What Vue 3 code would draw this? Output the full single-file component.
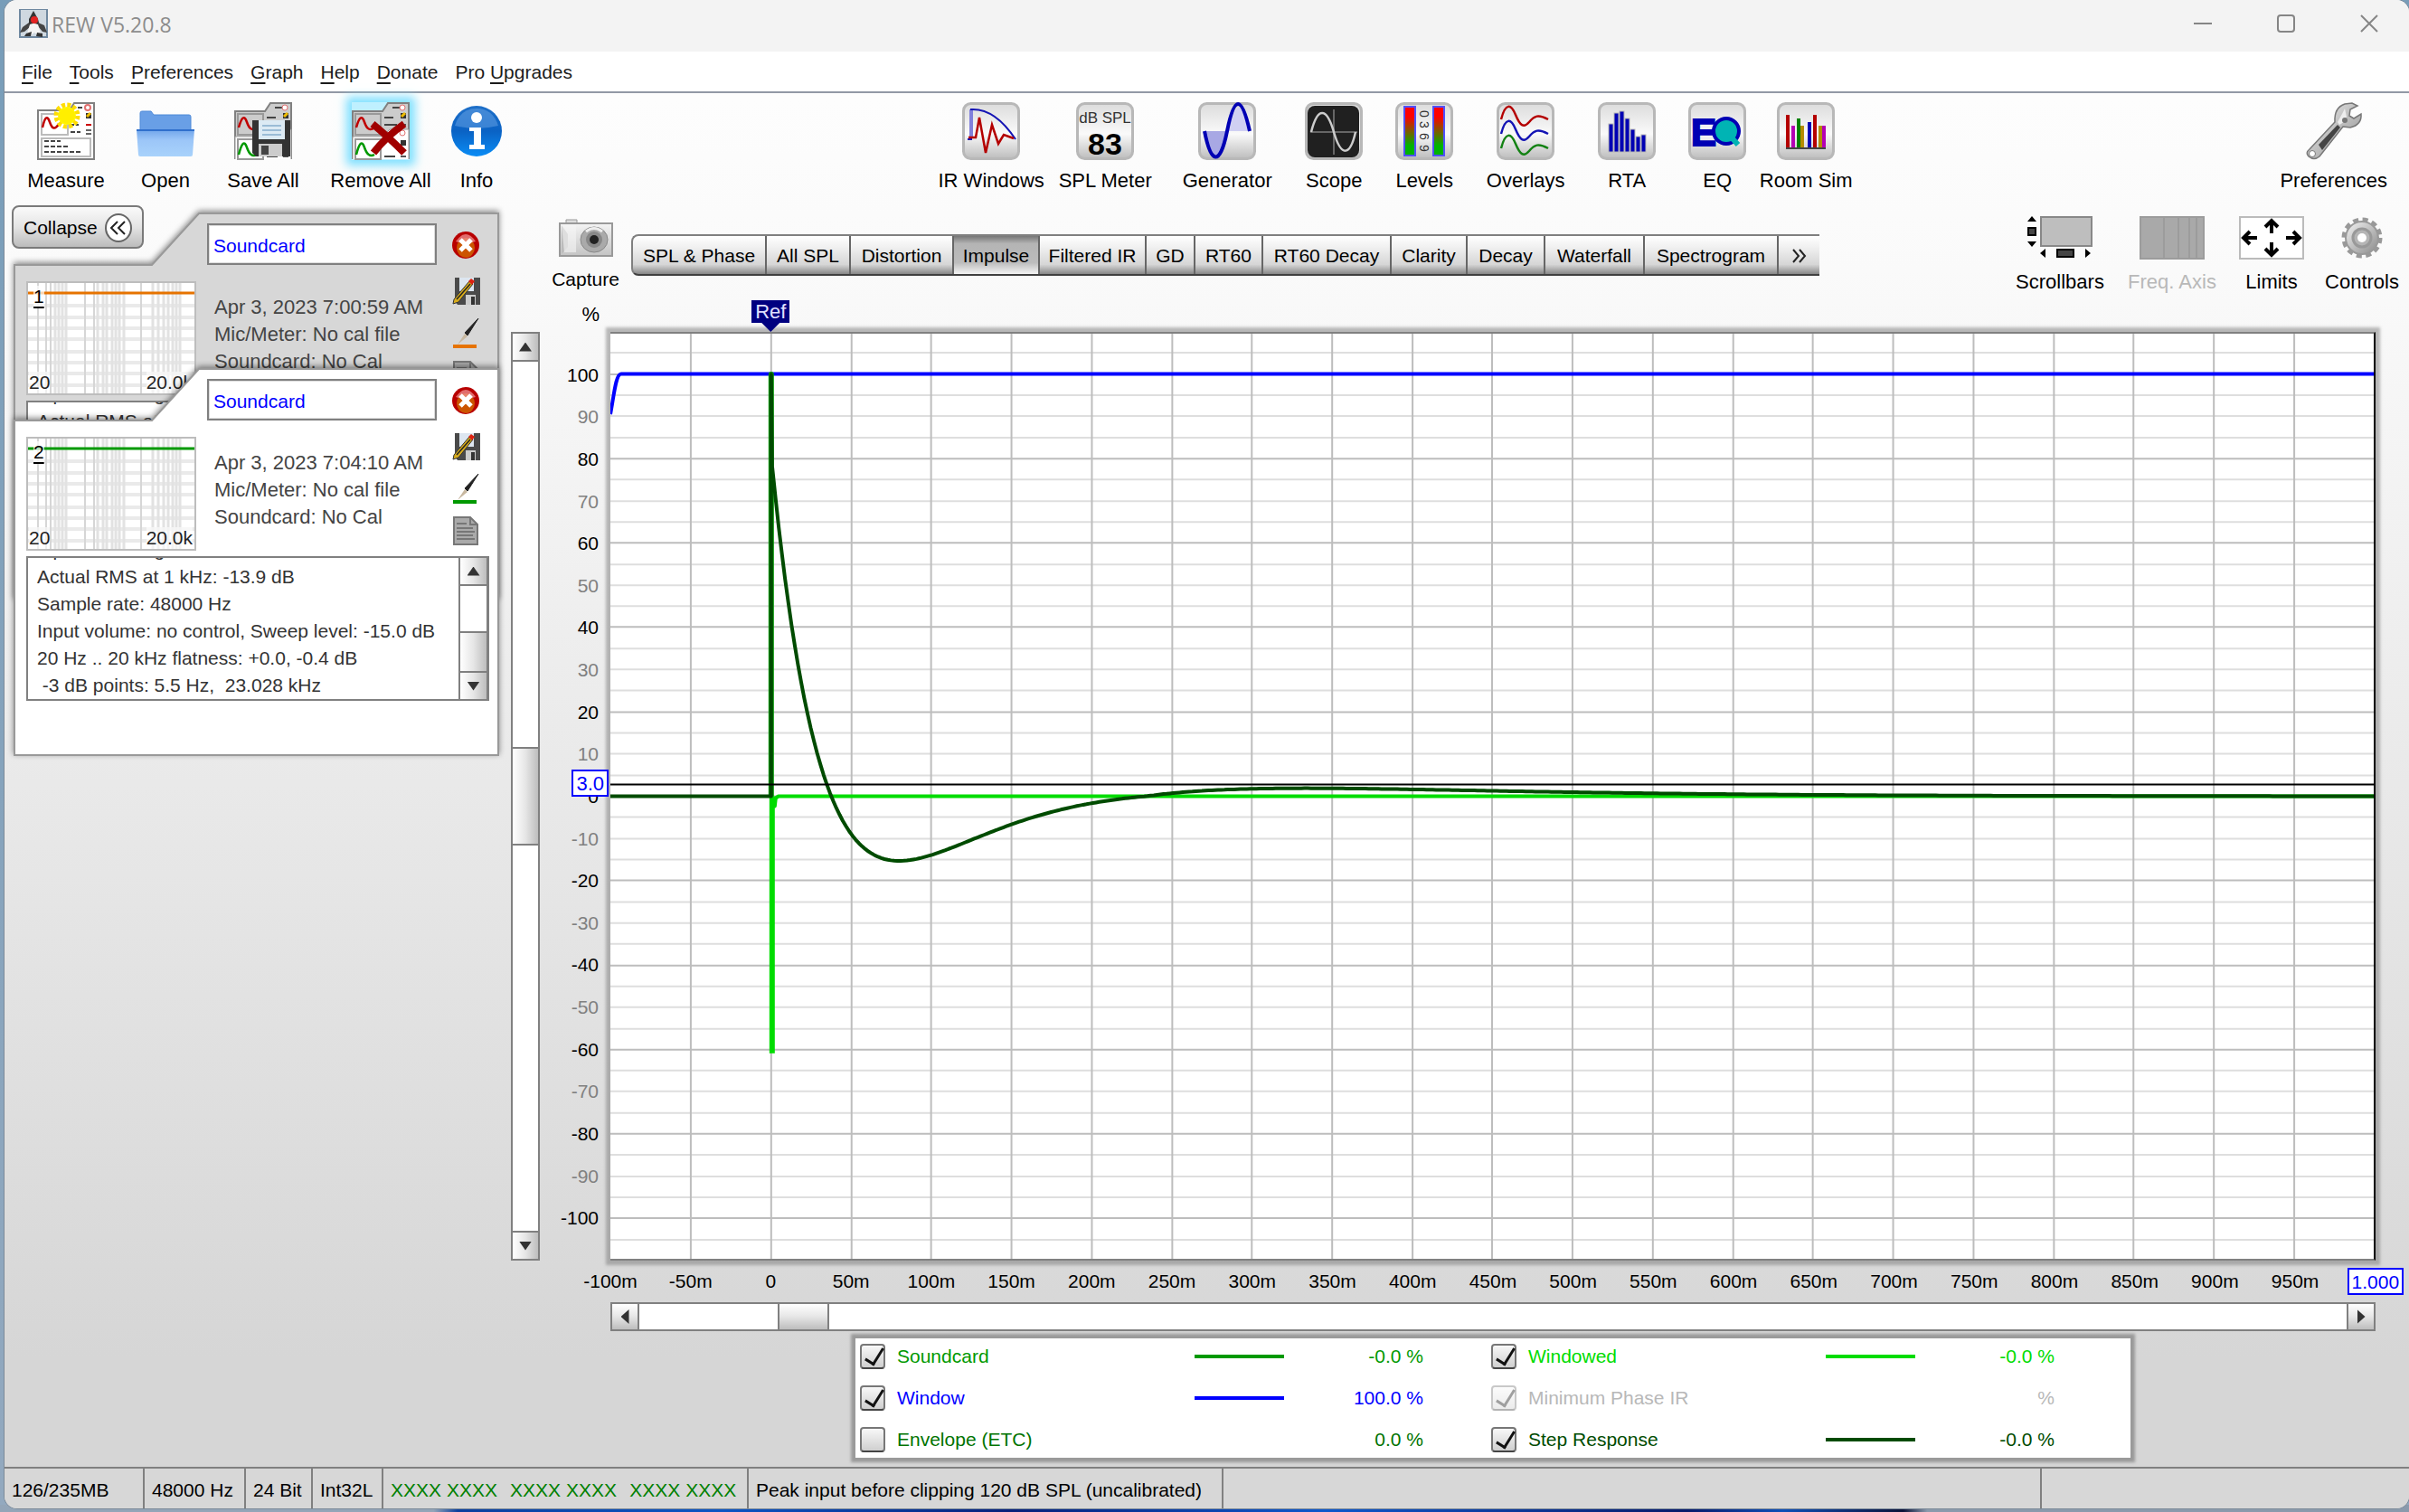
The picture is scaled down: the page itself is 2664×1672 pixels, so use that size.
<template>
  <div class="desktop">
    <div class="window">
      <header class="titlebar">
        <svg class="duke" width="32" height="32" viewBox="0 0 32 32">
          <rect width="32" height="32" fill="#6f88a0"/>
          <rect x="2" y="1" width="28" height="29" fill="#cfd8e0"/>
          <path d="M16 2l5 9 2 8H11l0-8z" fill="#333"/>
          <path d="M11 15l-7 5-3 6 5-1 6-5zM21 15l7 3 3 8-5-1-5-6z" fill="#444"/>
          <path d="M12 17q4-2 9 0l3 10-3 2-4-3-5 4-3-3z" fill="#f4f4f4"/>
          <path d="M8 27l6-2-1 5H6zM20 26l6 1 0 4-7-1z" fill="#333"/>
          <circle cx="17" cy="12" r="4" fill="#e32222"/>
        </svg>
        <span class="title">REW V5.20.8</span>
        <div class="win-controls">
          <button aria-label="Minimize"><svg width="20" height="20" viewBox="0 0 20 20"><path d="M0 10h20"/></svg></button>
          <button aria-label="Maximize"><svg width="20" height="20" viewBox="0 0 20 20"><rect x="1" y="1" width="18" height="18" rx="3"/></svg></button>
          <button aria-label="Close"><svg width="20" height="20" viewBox="0 0 20 20"><path d="M1 1l18 18M19 1L1 19"/></svg></button>
        </div>
      </header>

      <nav class="menubar">
        <button v-for="m in menus" :key="m.key + m.rest">{{ m.pre }}<u>{{ m.key }}</u>{{ m.rest }}</button>
      </nav>

      <div class="toolbar">
        <div class="tools tools-file">
          <button v-for="t in fileTools" :key="t.label" class="tool" :class="{ hot: t.hot }">
            <svg viewBox="0 0 64 64" v-html="t.icon"></svg>
            <span>{{ t.label }}</span>
          </button>
        </div>
        <div class="tools tools-main">
          <button v-for="t in mainTools" :key="t.label" class="tool">
            <svg viewBox="0 0 64 64" v-html="tile + t.icon"></svg>
            <span>{{ t.label }}</span>
          </button>
        </div>
        <div class="tools">
          <button class="tool">
            <svg viewBox="0 0 64 64">
              <path d="M5 52L33 22Q32 6 44 2L52 1 58 4 50 8 49 15 54 18 62 13Q63 25 50 28L42 27 16 60Q10 65 4 60 0 56 5 52z" fill="url(#steel)" stroke="#777" stroke-width="1.5"/>
              <path d="M15 47L36 25l3 3-20 25z" fill="#444"/>
              <circle cx="8" cy="57" r="3.5" fill="#fff" stroke="#777"/>
              <path d="M36 22l5-9 3-6 2 9-3 6-5 3z" fill="#eee"/>
              <circle cx="44" cy="20" r="3" fill="#777"/>
            </svg>
            <span>Preferences</span>
          </button>
        </div>
      </div>

      <main class="main">
        <aside class="sidebar">
          <button class="collapse">Collapse
            <svg width="30" height="32" viewBox="0 0 30 32"><ellipse cx="15" cy="16" rx="14" ry="15" fill="#fff" stroke="#666" stroke-width="2"/><path d="M14 9l-7 7 7 7M22 9l-7 7 7 7" fill="none" stroke="#222" stroke-width="2"/></svg>
          </button>
          <div class="deck">
            <section v-for="c in cards" :key="c.num" class="card">
              <svg class="card-shape" viewBox="0 0 540 430">
                <path d="M3 429V59H155L207 2H538V429z" :fill="c.fill" stroke="#999" stroke-width="2"/>
              </svg>
              <div class="card-body">
                <div class="thumb">
                  <svg viewBox="0 0 184 122" width="184" height="122">
                    <path d="M0 25h184M0 38h184M0 50h184M0 62h184M0 76h184M0 88h184M0 100h184M0 113h184" stroke="#eaeaea" stroke-width="4"/>
                    <path d="M11 0v122M20 0v122M25 0v122M63 0v122M73 0v122M125 0v122" stroke="#d6d6d6" stroke-width="2"/>
                    <path d="M30 0v122M34 0v122M38 0v122M42 0v122M77 0v122M83 0v122M87 0v122M93 0v122M97 0v122M101 0v122M106 0v122M138 0v122M144 0v122M150 0v122M155 0v122M160 0v122M164 0v122M168 0v122" stroke="#e2e2e2" stroke-width="3"/>
                    <path d="M0 11h184" :stroke="c.color" stroke-width="3"/>
                  </svg>
                  <u class="thumb-num">{{ c.num }}</u>
                  <span class="thumb-lo">20</span>
                  <span class="thumb-hi">20.0k</span>
                </div>
                <div class="card-mid">
                  <input type="text" v-model="c.name" :aria-label="'Measurement ' + c.num + ' name'">
                  <p class="meta">{{ c.date }}<br>Mic/Meter: No cal file<br>Soundcard: No Cal</p>
                </div>
                <div class="card-icons">
                  <button aria-label="Delete"><svg width="32" height="32" viewBox="0 0 32 32"><circle cx="16" cy="16" r="15" fill="#b80000"/><ellipse cx="16" cy="19" rx="10" ry="11" fill="#cc5500"/><path d="M5 12q11-16 22 0-11 4-22 0z" fill="#f29a9a" opacity=".7"/><path d="M10 10l12 12M22 10L10 22" stroke="#fff" stroke-width="5"/></svg></button>
                  <button aria-label="Save"><svg width="32" height="30" viewBox="0 0 32 30"><path d="M4 0h28v30H7l-3-4z" fill="#4a4a4a"/><path d="M9 0h16v15H9z" fill="#dde6f0"/><path d="M16 19h11v11H16z" fill="#ccc"/><path d="M22 21h4v9h-4z" fill="#333"/><path d="M3 24L20 4l4 3L8 27l-6 2z" fill="#d8ac1c" stroke="#333" stroke-width="1"/><path d="M6 24L21 7" stroke="#222" stroke-width="1.5"/><path d="M19 4l3-3 4 3-3 4z" fill="#d21"/></svg></button>
                  <button aria-label="Trace colour"><svg width="32" height="34" viewBox="0 0 32 34"><path d="M30 1L15 17l3 3z" fill="#222" stroke="#222"/><path d="M15 18l-8 12 11-9z" fill="#c8b8a0"/><path d="M2 32h26" :stroke="c.color" stroke-width="4"/></svg></button>
                  <button aria-label="Notes"><svg width="32" height="32" viewBox="0 0 32 32"><path d="M3 1h18l8 8v22H3z" fill="#aaa" stroke="#777" stroke-width="2"/><path d="M21 1v8h8M6 8h11M6 13h18M6 17h20M6 21h18M6 25h20" fill="none" stroke="#777" stroke-width="2"/></svg></button>
                </div>
              </div>
              <div class="notes">
                <div class="notes-text">
                  <div v-for="line in noteLines" :key="line">{{ line }}</div>
                </div>
                <div class="scroll scroll-y">
                  <button aria-label="Scroll up"><i class="up"></i></button>
                  <div class="track"></div>
                  <div class="handle"></div>
                  <button aria-label="Scroll down"><i class="down"></i></button>
                </div>
              </div>
            </section>
          </div>
        </aside>

        <div class="scroll scroll-y side-scroll">
          <button aria-label="Scroll up"><i class="up"></i></button>
          <div class="track"></div>
          <div class="handle"></div>
          <div class="track"></div>
          <button aria-label="Scroll down"><i class="down"></i></button>
        </div>

        <div class="graph-bar">
          <button class="tool capture">
            <svg viewBox="0 0 60 42">
              <path d="M8 1h12v6H8z" fill="#ddd" stroke="#999"/>
              <rect x="1" y="5" width="58" height="36" fill="url(#camera)" stroke="#999" stroke-width="2"/>
              <path d="M3 7l7 10v14l-7 8z" fill="#bbb"/>
              <path d="M3 7h16v30H6" fill="#f5f5f5" opacity=".6"/>
              <ellipse cx="39" cy="23" rx="15" ry="14" fill="#aaa" stroke="#888"/>
              <circle cx="39" cy="23" r="9" fill="#888"/>
              <circle cx="39" cy="23" r="5" fill="#222"/>
              <path d="M30 14q9-7 18 0" stroke="#eee" stroke-width="3" fill="none"/>
            </svg>
            <span>Capture</span>
          </button>
          <div class="tabs" role="tablist">
            <button v-for="t in tabs" :key="t" role="tab" :aria-selected="t === activeTab" :class="{ active: t === activeTab }" @click="activeTab = t">{{ t }}</button>
            <button class="more" aria-label="More graphs"><svg width="18" height="16" viewBox="0 0 18 16"><path d="M2 1l6 7-6 7M9 1l6 7-6 7" fill="none" stroke="#222" stroke-width="2"/></svg></button>
          </div>
          <div class="tools tools-graph">
            <button class="tool">
              <svg viewBox="0 0 72 48"><rect x="15" y="1" width="56" height="32" fill="#bebebe" stroke="#888" stroke-width="2"/><path d="M5 0l5 6H0zM5 34l5-6H0zM14 41l6-5v10zM70 41l-6-5v10z"/><path d="M1 13h8v8H1zM33 37h18v8H33z" fill="#444" stroke="#000" stroke-width="2"/></svg>
              <span>Scrollbars</span>
            </button>
            <button class="tool" disabled>
              <svg viewBox="0 0 72 48"><rect x="1" y="1" width="70" height="46" fill="#a9a9a9" stroke="#9c9c9c" stroke-width="2"/><path d="M27 0v48M43 0v48M55 0v48M63 0v48" stroke="#9c9c9c" stroke-width="2"/></svg>
              <span>Freq. Axis</span>
            </button>
            <button class="tool">
              <svg viewBox="0 0 72 48"><rect x="1" y="1" width="70" height="46" fill="#fff" stroke="#bbb" stroke-width="2"/><path d="M20 24H6m6-7l-7 7 7 7M52 24h14m-6-7l7 7-7 7M36 19V6m-7 6l7-7 7 7M36 29v13m-7-6l7 7 7-7" fill="none" stroke="#000" stroke-width="4"/></svg>
              <span>Limits</span>
            </button>
            <button class="tool">
              <svg viewBox="0 0 72 48"><circle cx="36" cy="24" r="20" fill="none" stroke="#999" stroke-width="5" stroke-dasharray="6 4.47"/><circle cx="36" cy="24" r="18" fill="url(#steel)" stroke="#999" stroke-width="2"/><circle cx="36" cy="24" r="10" fill="#b5b5b5" stroke="#999" stroke-width="3"/><circle cx="36" cy="24" r="5" fill="#fff"/></svg>
              <span>Controls</span>
            </button>
          </div>
        </div>

        <div class="y-axis">
          <span class="unit">%</span>
          <div v-for="v in yTicks" :key="v" class="y-tick" :class="{ minor: v % 20 }"><span v-if="Math.abs(v) < 110">{{ v }}</span></div>
        </div>

        <div class="plot">
          <svg viewBox="0 0 1952 1026" preserveAspectRatio="none">
            <path :d="minorGrid" class="grid minor"/>
            <path :d="majorGrid" class="grid"/>
            <path d="M0 91C4 70 6 46 12 46.500H1952" stroke="#0000ff" class="curve"/>
            <path d="M178 513V47V513" stroke="#009900" class="spike"/>
            <path d="M179 513L182 524 183 515 186 513H1952" stroke="#00dc00" class="curve"/>
            <path d="M179 513V797" stroke="#00dc00" class="spike"/>
            <path :d="stepCurve" stroke="#004b00" class="curve step"/>
            <path d="M0 500H1952" stroke="#000" stroke-width="2"/>
          </svg>
          <span class="ref-flag">Ref</span>
          <span class="y-cursor">3.0</span>
        </div>

        <div class="below">
          <div class="x-axis">
            <div v-for="x in xTicks" :key="x" :class="{ end: x === '1.000' }"><span>{{ x }}</span></div>
          </div>
          <div class="scroll scroll-x">
            <button aria-label="Scroll left"><i class="left"></i></button>
            <div class="track"></div>
            <div class="handle"></div>
            <div class="track track-rest"></div>
            <button aria-label="Scroll right"><i class="right"></i></button>
          </div>
          <div class="legend">
            <label v-for="s in series" :key="s.name" class="legend-row" :style="{ color: s.text }">
              <input type="checkbox" v-model="s.on" :disabled="s.off">
              <span class="name">{{ s.name }}</span>
              <i class="swatch" :style="{ background: s.line }"></i>
              <span class="value">{{ s.value }}</span>
            </label>
          </div>
        </div>
      </main>

      <footer class="statusbar">
        <span>126/235MB</span>
        <span>48000 Hz</span>
        <span>24 Bit</span>
        <span>Int32L</span>
        <span class="channels"><b v-for="n in 3" :key="n"><i>XXXX</i><i>XXXX</i></b></span>
        <span>Peak input before clipping 120 dB SPL (uncalibrated)</span>
        <span></span>
        <span></span>
      </footer>
    </div>

    <svg class="defs" width="0" height="0">
      <defs>
        <linearGradient id="tile" x2="0" y2="1"><stop offset="0" stop-color="#dcdcdc"/><stop offset=".55" stop-color="#fafafa"/><stop offset="1" stop-color="#bdbdbd"/></linearGradient>
        <linearGradient id="steel" x2="1" y2="1"><stop offset="0" stop-color="#f4f4f4"/><stop offset="1" stop-color="#8a8a8a"/></linearGradient>
        <linearGradient id="camera" x2="0" y2="1"><stop offset="0" stop-color="#f4f4f4"/><stop offset="1" stop-color="#c4c4c4"/></linearGradient>
        <linearGradient id="level" x2="0" y2="1"><stop offset=".2" stop-color="#f00"/><stop offset=".8" stop-color="#00b400"/></linearGradient>
        <linearGradient id="info" x2="0" y2="1"><stop offset="0" stop-color="#1e6fc8"/><stop offset=".5" stop-color="#0a62c4"/><stop offset="1" stop-color="#0a8cf5"/></linearGradient>
        <linearGradient id="folder" x2="0" y2="1"><stop offset="0" stop-color="#6fa4ea"/><stop offset=".4" stop-color="#9cc6f8"/><stop offset="1" stop-color="#a8d2fb"/></linearGradient>
      </defs>
    </svg>
  </div>
</template>

<script setup>
import { ref, reactive } from 'vue'

const menus = [
  { key: 'F', rest: 'ile' },
  { key: 'T', rest: 'ools' },
  { key: 'P', rest: 'references' },
  { key: 'G', rest: 'raph' },
  { key: 'H', rest: 'elp' },
  { key: 'D', rest: 'onate' },
  { pre: 'Pro ', key: 'U', rest: 'pgrades' }
]

// stacked measurement panels, shared by Save All and Remove All
const panels = `
  <path d="M1 63V10H34L40 1H63V63" fill="#ccc" stroke="#808080" stroke-width="2"/>
  <path d="M1 63V38H34L42 30H63V63" fill="#fff" stroke="#999"/>
  <path d="M4 13h28v23H4zM4 41h28v22H4z" fill="none" stroke="#999" stroke-width="2"/>
  <path d="M5 28Q10 10 14 22T25 28" fill="none" stroke="#c00000" stroke-width="2.5"/>
  <path d="M5 58Q10 38 14 50T25 58" fill="none" stroke="#009900" stroke-width="2.5"/>
  <path d="M45 6h8M36 17h10M36 25h14M36 60h12" stroke="#444" stroke-width="2"/>
  <circle cx="56" cy="6" r="3" fill="#fff" stroke="#e07070"/><circle cx="56" cy="34" r="3" fill="#fff" stroke="#e07070"/>
  <path d="M54 12h6v6h-6z" fill="#333"/><path d="M55 16l4-4" stroke="#eb0" stroke-width="3"/>
  <path d="M54 42h6v6h-6z" fill="#333"/><path d="M54 25h6M54 60h6" stroke="#555" stroke-width="2"/>`

const fileTools = [
  {
    label: 'Measure',
    icon: `<path d="M1 63V9H36L41 1H63V63z" fill="#fff" stroke="#808080" stroke-width="2"/>
      <path d="M5 13h29v23H5zM5 40h54v20H5z" fill="none" stroke="#bbb" stroke-width="2"/>
      <path d="M6 28Q10 10 14 22T24 24" fill="none" stroke="#c00000" stroke-width="2.5"/>
      <path d="M45 6h7M36 25h10M37 33h11M8 43h18M8 49h28M8 55h40" stroke="#444" stroke-width="2" stroke-dasharray="5 2"/>
      <circle cx="56" cy="6" r="3" fill="#fff" stroke="#e07070" stroke-width="2"/>
      <path d="M54 12h6v6h-6z" fill="#333"/><path d="M55 16l4-4" stroke="#eb0" stroke-width="3"/>
      <path d="M54 25h6" stroke="#c00" stroke-width="2"/><path d="M54 31h6M54 35h6" stroke="#666" stroke-width="2"/>
      <circle cx="33" cy="15" r="10" fill="#ff0"/><circle cx="33" cy="15" r="12" fill="none" stroke="#fd0" stroke-width="5" stroke-dasharray="4 2.28"/>
      <circle cx="33" cy="15" r="9" fill="#ffef00"/>`
  },
  {
    label: 'Open',
    icon: `<path d="M4 38V12Q4 10 6 10H16L19 14H58Q60 14 60 16V38z" fill="#699fe6" stroke="#4f8ad8"/>
      <path d="M0 30H64L62 58Q62 60 60 60H4Q2 60 2 58z" fill="url(#folder)"/><path d="M0 31h64" stroke="#2f6fcc" stroke-width="2"/>`
  },
  {
    label: 'Save All',
    icon: panels + `<path d="M20 20H62V60H24L20 56z" fill="#333"/><path d="M27 20h29v21H27z" fill="#dceaf4"/>
      <path d="M31 26h21M31 31h21M31 36h21" stroke="#9bbcd6" stroke-width="2"/><path d="M27 46h26v14H27z" fill="#ccc"/><path d="M30 48h8v10h-8z" fill="#444"/>`
  },
  {
    label: 'Remove All',
    hot: true,
    icon: panels + '<path d="M23 24Q40 38 58 56M58 24Q38 38 24 56" fill="none" stroke="#a00000" stroke-width="8"/>'
  },
  {
    label: 'Info',
    icon: `<circle cx="32" cy="32" r="28" fill="url(#info)"/><path d="M8 26Q14 7 32 7T56 26Q32 32 8 26z" fill="#7fb4ee" opacity=".4"/>
      <circle cx="32" cy="17" r="6" fill="#fff"/><path d="M24 28H37V47H41V52H24V47H29V32H24z" fill="#fff"/>`
  }
]

const tile = '<rect x="1.5" y="1.5" width="61" height="61" rx="8" fill="url(#tile)" stroke="#b8b8b8" stroke-width="3"/>'

const mainTools = [
  {
    label: 'IR Windows',
    icon: `<path d="M10 8v31" stroke="#8080dc" stroke-width="4"/><path d="M6 41H11M9 8Q36 6 59 41" fill="none" stroke="#1414b4" stroke-width="2"/>
      <path d="M7 39H15L19 17 26 56 33 25 40 46 46 36 57 40" fill="none" stroke="#b40000" stroke-width="2.5"/>`
  },
  {
    label: 'SPL Meter',
    icon: `<text x="32" y="23" text-anchor="middle" font-size="17" fill="#333">dB SPL</text>
      <text x="32" y="58" text-anchor="middle" font-size="34" font-weight="bold">83</text>`
  },
  {
    label: 'Generator',
    icon: `<path d="M7 32Q19 86 32 32z" fill="#a8a8e4"/><path d="M32 32Q46-20 57 32z" fill="#d0d0f2"/>
      <path d="M7 32C14 68 24 72 32 32S48-8 57 32" fill="none" stroke="#0000b4" stroke-width="4"/>`
  },
  {
    label: 'Scope',
    icon: `<rect x="3" y="4" width="57" height="57" rx="8" fill="#202020"/><path d="M6 33H58M32 8V58" stroke="#666" stroke-width="2"/>
      <path d="M7 33C14 5 24 5 32 33S50 60 56 33" fill="none" stroke="#ccc" stroke-width="2.5"/>`
  },
  {
    label: 'Levels',
    icon: `<rect x="10" y="5" width="12" height="54" fill="url(#level)" stroke="#5050ff" stroke-width="2"/><rect x="42" y="5" width="12" height="54" fill="url(#level)" stroke="#5050ff" stroke-width="2"/>
      <g font-size="14" fill="#333"><text transform="translate(27 9) rotate(90)">0</text><text transform="translate(27 21) rotate(90)">3</text><text transform="translate(27 34) rotate(90)">6</text><text transform="translate(27 47) rotate(90)">9</text></g>`
  },
  {
    label: 'Overlays',
    icon: ['#b40000', '#1414b4', '#148214'].map((c, i) =>
      `<path transform="translate(0 ${i * 16})" d="M5 19C10 0 16 2 21 14S30 29 36 22 46 13 57 19" fill="none" stroke="${c}" stroke-width="2.5"/>`).join('')
  },
  {
    label: 'RTA',
    icon: '<g fill="#0000b4" stroke="#b8b8b8" stroke-width="1">' + [24, 12, 10, 18, 30, 38, 36].map((y, i) =>
      `<rect x="${12 + i * 6}" y="${y}" width="5" height="${55 - y}"/>`).join('') + '</g>'
  },
  {
    label: 'EQ',
    icon: `<text x="3" y="48" font-size="42" font-weight="bold" fill="#0000b4" stroke="#0000b4" stroke-width="2">E</text>
      <circle cx="42" cy="32" r="14" fill="#00b4b4" stroke="#0000b4" stroke-width="4"/><path d="M45 36L55 47" stroke="#00b4b4" stroke-width="6"/>`
  },
  {
    label: 'Room Sim',
    icon: [[10, 14, '#b40000'], [16, 26, '#b400b4'], [22, 18, '#008000'], [26, 26, '#b48c00'], [34, 22, '#0000b4'], [40, 14, '#b40000'], [46, 26, '#b48c00'], [50, 26, '#b400b4']].map(b =>
      `<rect x="${b[0]}" y="${b[1]}" width="4" height="${51 - b[1]}" fill="${b[2]}"/>`).join('') + '<path d="M10 51h44" stroke="#444" stroke-width="2"/>'
  }
]

const cards = reactive([
  { num: 1, name: 'Soundcard', date: 'Apr 3, 2023 7:00:59 AM', color: '#e67300', fill: '#d7d7d7' },
  { num: 2, name: 'Soundcard', date: 'Apr 3, 2023 7:04:10 AM', color: '#009900', fill: '#ffffff' }
])

const noteLines = [
  'Input RMS target',
  'Actual RMS at 1 kHz: -13.9 dB',
  'Sample rate: 48000 Hz',
  'Input volume: no control, Sweep level: -15.0 dB',
  '20 Hz .. 20 kHz flatness: +0.0, -0.4 dB',
  ' -3 dB points: 5.5 Hz,  23.028 kHz'
]

const tabs = ['SPL & Phase', 'All SPL', 'Distortion', 'Impulse', 'Filtered IR', 'GD', 'RT60', 'RT60 Decay', 'Clarity', 'Decay', 'Waterfall', 'Spectrogram']
const activeTab = ref('Impulse')

const yTicks = Array.from({ length: 23 }, (_, i) => 110 - i * 10)
const xTicks = Array.from({ length: 23 }, (_, i) => {
  const ms = -100 + i * 50
  if (ms === 1000) return '1.000'
  return ms ? ms + 'm' : '0'
})

const px = ms => (ms + 100) * 1952 / 1100
const py = pct => (110 - pct) * 1026 / 220

let minorGrid = ''
let majorGrid = ''
for (let v = -105; v < 110; v += 5) {
  const line = `M0 ${Math.round(py(v))}H1952`
  if (v % 20) minorGrid += line
  else majorGrid += line
}
for (let ms = -50; ms < 1000; ms += 50) {
  majorGrid += `M${Math.ceil(px(ms))} 0V1026`
}

// second-order high-pass response with a slow tail
function step(t) {
  if (t <= 233) return 78 * (1 - t / 36.8) * (1 - t / 233) * Math.exp(-0.0171 * t)
  const u = t - 233
  return 0.0516 * u * Math.exp(-u / 100)
}

let stepCurve = `M0 513H178V47L179 ${py(78)}`
for (let t = 0; t <= 1000; t += 2) {
  stepCurve += `L${px(t + 1).toFixed(1)} ${py(step(t)).toFixed(1)}`
}

const series = reactive([
  { name: 'Soundcard', on: true, text: '#009900', line: '#009900', value: '-0.0 %' },
  { name: 'Windowed', on: true, text: '#00dc00', line: '#00dc00', value: '-0.0 %' },
  { name: 'Window', on: true, text: '#0000ff', line: '#0000ff', value: '100.0 %' },
  { name: 'Minimum Phase IR', on: true, off: true, text: '#b8b8b8', line: 'none', value: '%' },
  { name: 'Envelope (ETC)', on: false, text: '#007300', line: 'none', value: '0.0 %' },
  { name: 'Step Response', on: true, text: '#004b00', line: '#004b00', value: '-0.0 %' }
])
</script>

<style>
body {
  margin: 0;
}
</style>

<style scoped>
.desktop {
  box-sizing: border-box;
  min-height: 100vh;
  display: flex;
  padding: 0 0 4px 5px;
  background:
    linear-gradient(90deg, #93a5b8 18%, #0a3f9e 19%, #0b55c4 30%, #06207a 42%, #0d58cc 55%, #081a6a 70%, #0d4fb8 74%, #0a1238 79%, #8a9aac 80%) bottom / 100% 8px no-repeat,
    linear-gradient(#789db9, #93a9bf);
  font-family: "Liberation Sans", Arial, sans-serif;
  font-size: 22px;
  line-height: 30px;
  color: #000;
}

.desktop * {
  box-sizing: border-box;
}

button {
  font: inherit;
  color: inherit;
  background: none;
  border: none;
  padding: 0;
  white-space: nowrap;
}

svg {
  display: block;
}

.defs {
  position: absolute;
}

.window {
  flex: 1;
  min-width: 0;
  display: flex;
  flex-direction: column;
  border-radius: 14px;
  overflow: hidden;
  background: linear-gradient(#fdfdfd 110px, #fafafa 300px, #d6d6d6 1500px);
  box-shadow: 0 0 0 1px #7d8b99;
}

.titlebar {
  height: 57px;
  padding: 0 34px 6px 16px;
  display: flex;
  align-items: center;
  gap: 4px;
  background: #f3f3f3;
}

.title {
  padding-top: 2px;
  font-family: "Open Sans", "Noto Sans", sans-serif;
  font-size: 23px;
  color: #8c8c8c;
}

.win-controls {
  margin-left: auto;
  display: flex;
  gap: 72px;
}

.win-controls svg {
  fill: none;
  stroke: #858585;
  stroke-width: 2;
}

.menubar {
  height: 46px;
  padding: 2px 0 0 19px;
  display: flex;
  align-items: center;
  gap: 19px;
  background: #fff;
  border-bottom: 2px solid #9298a5;
  font-size: 21px;
}

.menubar u,
.thumb-num {
  text-underline-offset: 4px;
  text-decoration-thickness: 2px;
}

.menubar button {
  color: #1c1c1c;
}

.toolbar {
  height: 119px;
  padding-top: 10px;
  display: flex;
  justify-content: space-between;
}

.tools {
  display: grid;
  grid-auto-flow: column;
  align-items: start;
}

.tools-file {
  padding-left: 8px;
  grid-template-columns: 120px 100px 116px 144px 68px;
}

.tools-main {
  grid-template-columns: 120px 132px 138px 98px 102px 122px 102px 98px 98px;
}

.toolbar > .tools:last-child {
  padding-right: 24px;
}

.tool {
  display: flex;
  flex-direction: column;
  align-items: center;
  gap: 8px;
}

.tool svg {
  width: 64px;
  height: 64px;
  overflow: visible;
}

.tool.hot svg {
  background: #bff0ff;
  box-shadow: 0 0 10px 6px #7fe0ff;
}

.tool:disabled {
  color: #b8b8b8;
}

.main {
  flex: 1;
  display: grid;
  grid-template-columns: 560px 32px 78px 1fr 37px;
  grid-template-rows: 145px 1fr auto;
}

.sidebar {
  grid-area: 1 / 1 / 4 / 2;
  padding: 5px 0 0 8px;
  display: grid;
  align-content: start;
  justify-content: start;
}

.collapse {
  grid-area: 1 / 1;
  justify-self: start;
  z-index: 1;
  width: 146px;
  height: 48px;
  padding: 2px 11px 0;
  display: flex;
  align-items: center;
  justify-content: space-between;
  border: 2px solid #7a7a7a;
  border-radius: 8px;
  background: linear-gradient(#fafafa, #e4e4e4 50%, #bcbcbc);
  font-size: 21px;
}

.deck {
  grid-area: 1 / 1;
  padding-top: 7px;
}

.card {
  position: relative;
  width: 540px;
  height: 430px;
  padding: 13px 12px 0 16px;
}

.card + .card {
  margin-top: -258px;
}

.card-shape {
  position: absolute;
  inset: 0;
  width: 540px;
  height: 430px;
  overflow: visible;
  filter: drop-shadow(0 -2px 3px rgba(0, 0, 0, 0.45));
}

.card-body {
  position: relative;
  display: flex;
  gap: 12px;
}

.thumb {
  position: relative;
  width: 188px;
  height: 126px;
  margin-top: 64px;
  border: 2px solid #bdbdbd;
  background: #fff;
  color: #222;
  font-size: 21px;
  line-height: 24px;
}

.thumb-num,
.thumb-lo,
.thumb-hi {
  position: absolute;
}

.thumb-num {
  top: 3px;
  left: 6px;
  background: rgba(255, 255, 255, 0.7);
  color: #000;
}

.thumb-lo,
.thumb-hi {
  bottom: 0;
  background: rgba(255, 255, 255, 0.6);
}

.thumb-lo {
  left: 1px;
}

.thumb-hi {
  right: 2px;
}

.card-mid {
  width: 254px;
}

.card-mid input {
  display: block;
  width: 100%;
  height: 46px;
  padding: 4px 5px 0;
  border: 2px solid #808080;
  border-radius: 0;
  background: #fff;
  box-shadow: inset 0 0 0 1px #ddd;
  font: inherit;
  font-size: 21px;
  color: #0000ff;
}

.meta {
  margin: 32px 0 0;
  padding-left: 8px;
  color: #444;
  white-space: nowrap;
}

.card-icons {
  padding: 8px 0 0 4px;
  display: flex;
  flex-direction: column;
  gap: 14px;
}

.card-icons button:first-child {
  margin-bottom: 6px;
}

.notes {
  position: relative;
  height: 160px;
  margin-top: 6px;
  display: flex;
  border: 2px solid #808080;
  background: #fff;
  color: #333;
  font-size: 21px;
}

.notes-text {
  flex: 1;
  min-width: 0;
  padding-left: 10px;
  display: flex;
  flex-direction: column;
  justify-content: flex-end;
  overflow: hidden;
  white-space: pre;
  line-height: 30px;
}

.scroll {
  display: flex;
  background: #fff;
  border: 2px solid #808080;
}

.scroll button,
.handle {
  flex: none;
  display: flex;
  align-items: center;
  justify-content: center;
}

.scroll-y {
  flex-direction: column;
}

.scroll-y button,
.scroll-y .handle {
  height: 31px;
  background: linear-gradient(90deg, #fff, #e6e6e6 50%, #bdbdbd);
}

.scroll-y button:first-child {
  border-bottom: 2px solid #808080;
}

.scroll-y button:last-child {
  border-top: 2px solid #808080;
}

.scroll-y .handle {
  border-top: 2px solid #808080;
}

.track {
  flex: 1;
}

.notes .scroll {
  width: 32px;
  border-width: 0 2px;
  border-right-width: 1px;
}

.notes .handle {
  height: 44px;
}

.side-scroll {
  grid-area: 2 / 2;
}

.side-scroll .handle {
  height: 109px;
  border-bottom: 2px solid #808080;
}

.scroll i {
  width: 14px;
  height: 10px;
  background: #333;
}

.up {
  clip-path: polygon(50% 0, 100% 100%, 0 100%);
}

.down {
  clip-path: polygon(0 0, 100% 0, 50% 100%);
}

.scroll .left,
.scroll .right {
  width: 9px;
  height: 16px;
}

.left {
  clip-path: polygon(0 50%, 100% 0, 100% 100%);
}

.right {
  clip-path: polygon(0 0, 100% 50%, 0 100%);
}

.scroll-x {
  height: 32px;
}

.scroll-x button,
.scroll-x .handle {
  width: 30px;
  background: linear-gradient(#fff, #e6e6e6 50%, #bdbdbd);
}

.scroll-x button:first-child,
.scroll-x .handle {
  border-right: 2px solid #808080;
}

.scroll-x button:last-child {
  border-left: 2px solid #808080;
}

.scroll-x .handle {
  width: 57px;
  border-left: 2px solid #808080;
}

.scroll-x .track-rest {
  flex: 11;
}

.graph-bar {
  grid-area: 1 / 3 / 2 / 6;
  display: flex;
  align-items: flex-start;
}

.capture {
  width: 101px;
  padding-top: 20px;
  gap: 10px;
}

.graph-bar .capture {
  font-size: 21px;
}

.graph-bar .capture svg {
  width: 60px;
  height: 42px;
}

.tabs {
  height: 46px;
  margin-top: 37px;
  display: grid;
  grid-template-columns: 146px 93px 114px 95px 118px 54px 75px 142px 84px 86px 110px 148px 47px;
  border: solid #808080;
  border-width: 2px 0 2px 2px;
  border-bottom-color: #404040;
  border-radius: 8px 0 0 8px;
  background: linear-gradient(#fff, #f0f0f0 30%, #d6d6d6 75%, #888);
  font-size: 21px;
}

.tabs button {
  padding-top: 2px;
}

.tabs button + button {
  border-left: 2px solid #666;
}

.tabs .active {
  background: linear-gradient(#777, #b4b4b4 20%, #bcbcbc 70%, #f4f4f4);
}

.more {
  display: flex;
  align-items: center;
  justify-content: center;
}

.tools-graph {
  margin-left: auto;
  padding-top: 17px;
  grid-template-columns: 124px 124px 96px 104px;
}

.graph-bar .tools-graph svg {
  width: 72px;
  height: 48px;
}

.tools-graph .tool {
  gap: 10px;
}

.y-axis {
  grid-area: 2 / 3;
  position: relative;
  padding: 1px 13px 0 0;
  display: flex;
  flex-direction: column;
  justify-content: space-between;
}

.unit {
  position: absolute;
  right: 12px;
  bottom: calc(100% + 4px);
}

.y-tick {
  height: 0;
  display: flex;
  align-items: center;
  justify-content: flex-end;
  font-size: 21px;
}

.y-tick.minor {
  color: #808080;
}

.plot {
  grid-area: 2 / 4;
  position: relative;
  min-height: 600px;
  background: #fff;
  border: 2px solid #808080;
  border-width: 2px 2px 2px 0;
  border-right-color: #000;
  box-shadow: 0 0 3px 5px rgba(120, 120, 120, 0.5);
}

.plot svg {
  position: absolute;
  left: 0;
  top: -2px;
  width: 100%;
  height: calc(100% + 4px);
  fill: none;
  clip-path: inset(2px 0);
}

.grid {
  stroke: #bdbdbd;
  stroke-width: 2;
}

.grid.minor {
  stroke: #dedede;
}

.curve {
  stroke-width: 4;
  stroke-linejoin: round;
}

.spike {
  stroke-width: 6;
  stroke-linejoin: round;
}

.ref-flag {
  position: absolute;
  left: calc(100% / 11);
  bottom: calc(100% + 12px);
  transform: translateX(-50%);
  width: 42px;
  height: 25px;
  line-height: 26px;
  text-align: center;
  background: #000080;
  color: #e0e0ff;
}

.ref-flag::after {
  content: "";
  position: absolute;
  left: 11px;
  top: 100%;
  width: 20px;
  height: 10px;
  background: #000080;
  clip-path: polygon(0 0, 100% 0, 50% 100%);
}

.y-cursor {
  position: absolute;
  right: calc(100% + 2px);
  top: 48.6%;
  transform: translateY(-50%);
}

.y-cursor,
.x-axis .end span {
  height: 30px;
  padding: 0 3px;
  line-height: 28px;
  border: 2px solid #0000ff;
  background: #fff;
  color: #0000ff;
}

.below {
  grid-area: 3 / 4;
  padding: 8px 0 10px;
}

.x-axis {
  height: 38px;
  display: flex;
  justify-content: space-between;
  font-size: 21px;
}

.x-axis div {
  width: 0;
  height: 30px;
  display: flex;
  justify-content: center;
}

.legend {
  width: 1410px;
  height: 132px;
  margin: 8px auto 0;
  padding-left: 5px;
  display: grid;
  grid-template-columns: 698px 698px;
  grid-auto-rows: 46px;
  align-content: center;
  background: #fff;
  box-shadow: 0 0 3px 5px #9a9a9a;
  font-size: 21px;
}

.legend-row {
  display: grid;
  grid-template-columns: 28px 342px 99px 154px;
  align-items: center;
}

.legend .name {
  padding-left: 13px;
}

.legend-row input {
  appearance: none;
  position: relative;
  width: 28px;
  height: 28px;
  margin: 0;
  border: 2px solid #777;
  border-bottom-color: #444;
  border-radius: 4px;
  background: linear-gradient(#f8f8f8, #cfcfcf);
}

.legend-row input:checked::after {
  content: "";
  position: absolute;
  left: 8px;
  top: -1px;
  width: 9px;
  height: 19px;
  border: solid #111;
  border-width: 0 3px 3px 0;
  transform: rotate(32deg);
}

.legend-row input:disabled {
  opacity: 0.4;
}

.swatch {
  height: 4px;
}

.value {
  text-align: right;
}

.statusbar {
  height: 46px;
  display: grid;
  grid-template-columns: 155px 112px 74px 78px 404px 525px 905px 1fr;
  background: #d7d7d7;
  border-top: 2px solid #808080;
  font-size: 21px;
  line-height: 48px;
}

.statusbar > span {
  padding-left: 8px;
  border-right: 2px solid #808080;
  white-space: nowrap;
}

.statusbar > span:last-child {
  border-right: none;
}

.statusbar .channels {
  display: flex;
  gap: 14px;
  color: #008000;
}

.channels b {
  display: flex;
  gap: 6px;
  font-weight: normal;
}

.channels i {
  font-style: normal;
}
</style>
